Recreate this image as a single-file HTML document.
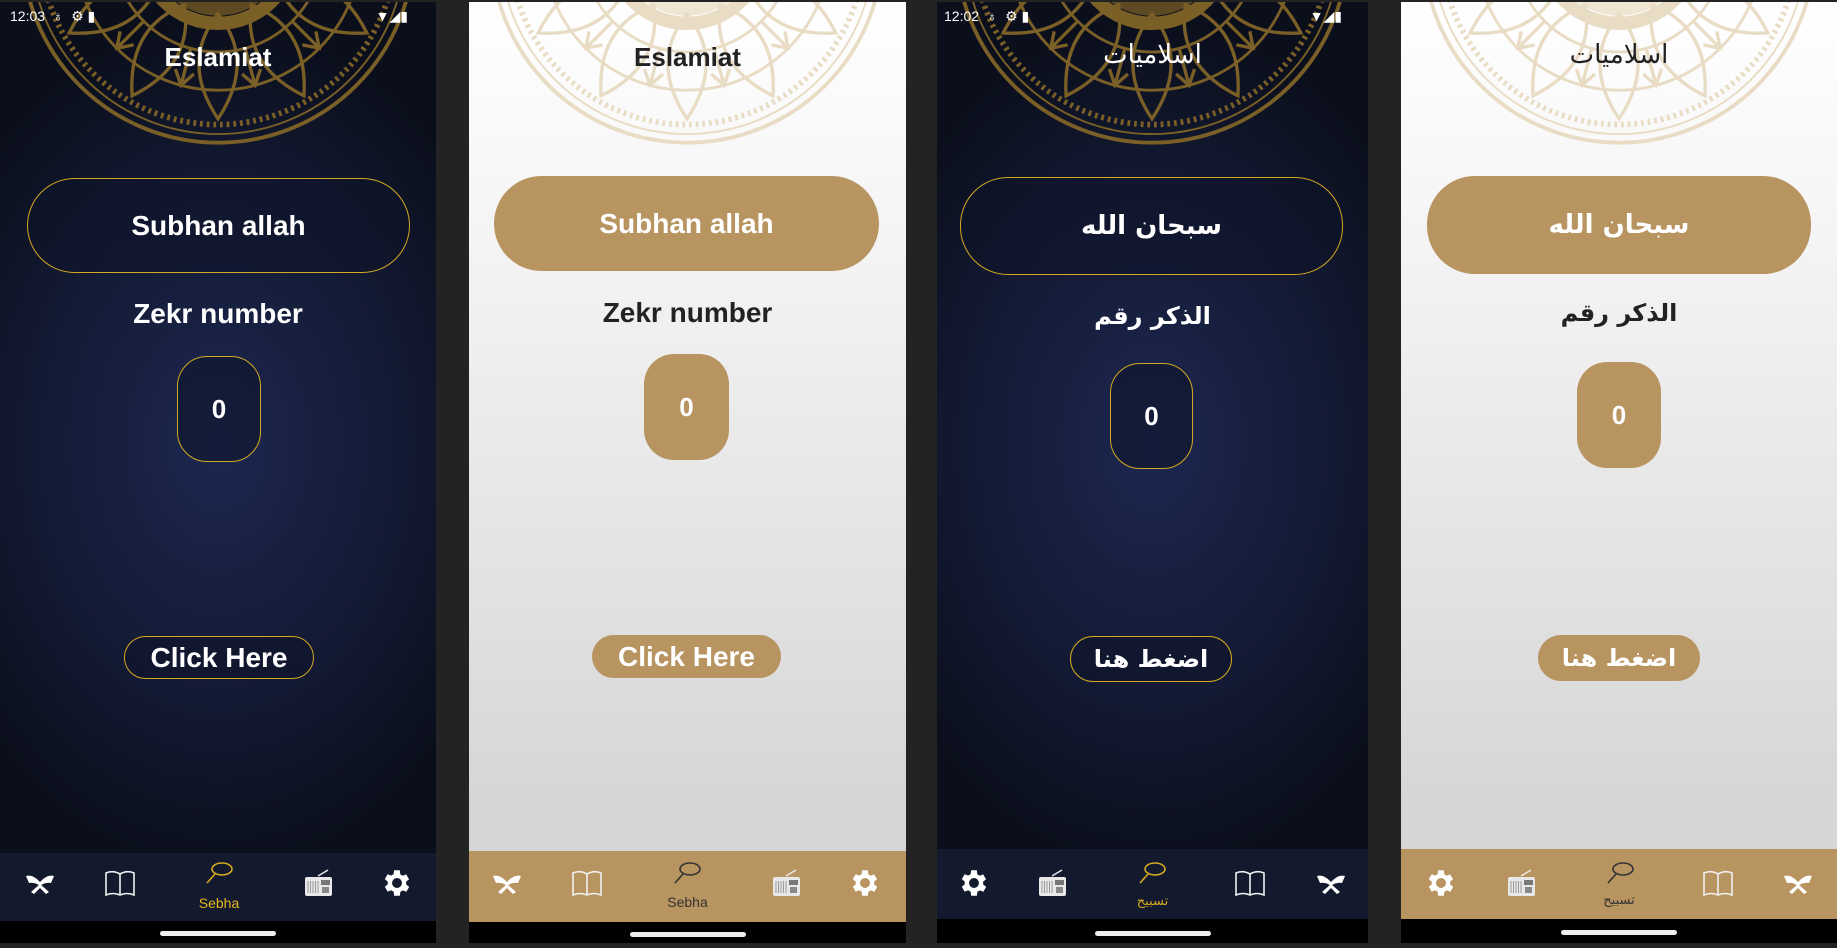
<!DOCTYPE html>
<html><head><meta charset="utf-8"><style>
*{margin:0;padding:0;box-sizing:border-box}
body{width:1837px;height:948px;background:#232323;position:relative;overflow:hidden;font-family:"Liberation Sans","DejaVu Sans",sans-serif}
.ph{position:absolute;top:2px;height:941px;overflow:hidden}
.dark{background:radial-gradient(ellipse 70% 45% at 50% 47%,#1d2750 0%,#141b36 55%,#0b0f1c 100%)}
.light{background:linear-gradient(#ffffff 0%,#f2f2f2 30%,#e3e3e3 60%,#d6d6d6 85%)}
.abs{position:absolute}
.ttl{position:absolute;left:0;right:0;text-align:center;font-weight:bold;font-size:26px;top:40px}
.btn{position:absolute;border-radius:48px;display:flex;align-items:center;justify-content:center;font-weight:bold;font-size:28px;color:#fff}
.dark .btn{border:1.5px solid #d4a820;background:rgba(15,20,40,.55)}
.light .btn{background:#b89461}
.lbl{position:absolute;left:0;right:0;text-align:center;font-weight:bold;font-size:28px}
.dark .lbl,.dark .ttl{color:#fff}
.light .lbl,.light .ttl{color:#222}
.nav{position:absolute;left:0;right:0}
.dark .nav{background:#141a2e}
.light .nav{background:#b89461}
.blk{position:absolute;left:0;right:0;bottom:0;background:#000}
.home{position:absolute;left:50%;margin-left:-58px;width:116px;height:5px;border-radius:3px;background:#eee}
.ic{position:absolute;width:34px;height:34px;margin-left:-17px}
.sb{position:absolute;top:6px;font-size:14px;color:#fff}
.ar{font-family:"DejaVu Sans",sans-serif}
</style></head><body>
<svg width="0" height="0" style="position:absolute">
<defs>
<symbol id="mand" viewBox="-220 -220 440 440">
<g fill="none" stroke="currentColor">
<circle r="205" stroke-width="4"/><circle r="196" stroke-width="2"/><circle r="186" stroke-width="6" stroke-dasharray="3 4"/>
<circle r="150" stroke-width="3"/><circle r="110" stroke-width="3"/><circle r="80" stroke-width="14"/>
<g stroke-width="3.5">
<path d="M0 70 Q40 120 0 180 Q-40 120 0 70Z"/><path d="M0 70 Q40 120 0 180 Q-40 120 0 70Z" transform="rotate(30)"/><path d="M0 70 Q40 120 0 180 Q-40 120 0 70Z" transform="rotate(-30)"/><path d="M0 70 Q40 120 0 180 Q-40 120 0 70Z" transform="rotate(60)"/><path d="M0 70 Q40 120 0 180 Q-40 120 0 70Z" transform="rotate(-60)"/><path d="M0 70 Q40 120 0 180 Q-40 120 0 70Z" transform="rotate(90)"/><path d="M0 70 Q40 120 0 180 Q-40 120 0 70Z" transform="rotate(-90)"/>
<path d="M0 110 L0 150 M-10 135 L0 150 L10 135" transform="rotate(15)"/><path d="M0 110 L0 150 M-10 135 L0 150 L10 135" transform="rotate(-15)"/><path d="M0 110 L0 150 M-10 135 L0 150 L10 135" transform="rotate(45)"/><path d="M0 110 L0 150 M-10 135 L0 150 L10 135" transform="rotate(-45)"/><path d="M0 110 L0 150 M-10 135 L0 150 L10 135" transform="rotate(75)"/><path d="M0 110 L0 150 M-10 135 L0 150 L10 135" transform="rotate(-75)"/>
</g></g>
<circle r="72" fill="currentColor" opacity=".75"/>
</symbol>
<symbol id="quran" viewBox="0 0 34 34"><path d="M3 10 Q10 8 17 16 Q24 8 31 10 L28 17 Q22 16 17 20 Q12 16 6 17Z M8 26 L17 18 L26 26 L23 28 L17 22 L11 28Z" fill="#fff"/></symbol>
<symbol id="book" viewBox="0 0 34 34"><path d="M3 7 Q10 4 17 8 Q24 4 31 7 L31 29 Q24 26 17 29 Q10 26 3 29Z M17 8 L17 29" fill="none" stroke="#f0f0f0" stroke-width="1.6"/></symbol>
<symbol id="radio" viewBox="0 0 34 34"><path d="M17 10 L27 4" stroke="#e8e8e8" stroke-width="1.5"/><rect x="4" y="11" width="27" height="19" rx="2" fill="#e8e8e8"/><g stroke="#999" stroke-width="1"><path d="M7 15v12M9.5 15v12M12 15v12M14.5 15v12M17 15v12"/></g><rect x="20" y="14" width="9" height="5" fill="#777"/><rect x="21" y="21" width="7" height="6" fill="#888"/></symbol>
<symbol id="gear" viewBox="0 0 24 24"><path fill="#fff" d="M19.4 13a7.5 7.5 0 0 0 0-2l2.1-1.6-2-3.5-2.5 1a7 7 0 0 0-1.7-1L15 3h-4l-.4 2.8a7 7 0 0 0-1.7 1l-2.5-1-2 3.5L6.5 11a7.5 7.5 0 0 0 0 2l-2.1 1.6 2 3.5 2.5-1a7 7 0 0 0 1.7 1L11 21h4l.4-2.8a7 7 0 0 0 1.7-1l2.5 1 2-3.5zM13 15.5a3.5 3.5 0 1 1 0-7 3.5 3.5 0 0 1 0 7z" transform="translate(-1 0)"/></symbol>
<symbol id="sebha" viewBox="0 0 34 34"><g fill="none" stroke="currentColor" stroke-width="1.6"><ellipse cx="20" cy="10" rx="10" ry="6"/><path d="M13 15 L5 24"/></g></symbol>
</defs></svg>

<!-- Phone 1 -->
<div class="ph dark" style="left:0;width:436px">
<svg class="abs" style="left:8px;top:-265px;color:#7a5f26" width="420" height="420"><use href="#mand"/></svg>
<div class="sb" style="left:10px">12:03 &nbsp;♁ &nbsp;⚙ ▮</div><div class="sb" style="right:28px">▼◢▮</div>
<div class="ttl" style="top:40px">Eslamiat</div>
<div class="btn" style="left:27px;top:176px;width:383px;height:95px">Subhan allah</div>
<div class="lbl" style="top:296px">Zekr number</div>
<div class="btn" style="left:177px;top:354px;width:84px;height:106px;border-radius:30px;font-size:26px">0</div>
<div class="btn" style="left:124px;top:634px;width:190px;height:43px">Click Here</div>
<div class="nav" style="top:851px;height:70px"></div>
<svg class="ic" style="left:40px;top:864px"><use href="#quran"/></svg>
<svg class="ic" style="left:120px;top:864px"><use href="#book"/></svg>
<svg class="ic" style="left:219px;top:857px;color:#d4a820"><use href="#sebha"/></svg>
<div class="abs" style="left:0;width:438px;top:893px;text-align:center;color:#e5b820;font-size:14px">Sebha</div>
<svg class="ic" style="left:318px;top:864px"><use href="#radio"/></svg>
<svg class="ic" style="left:397px;top:864px"><use href="#gear"/></svg>
<div class="blk" style="height:22px"><div class="home" style="top:10px"></div></div>
</div>

<!-- Phone 2 -->
<div class="ph light" style="left:469px;width:437px">
<svg class="abs" style="left:8px;top:-265px;color:#e9dcc4" width="420" height="420"><use href="#mand"/></svg>
<div class="ttl" style="top:40px">Eslamiat</div>
<div class="btn" style="left:25px;top:174px;width:385px;height:95px">Subhan allah</div>
<div class="lbl" style="top:295px">Zekr number</div>
<div class="btn" style="left:175px;top:352px;width:85px;height:106px;border-radius:30px;font-size:26px">0</div>
<div class="btn" style="left:123px;top:633px;width:189px;height:43px">Click Here</div>
<div class="nav" style="top:849px;height:71px"></div>
<svg class="ic" style="left:38px;top:864px"><use href="#quran"/></svg>
<svg class="ic" style="left:118px;top:864px"><use href="#book"/></svg>
<svg class="ic" style="left:218px;top:857px;color:#333"><use href="#sebha"/></svg>
<div class="abs" style="left:0;width:437px;top:892px;text-align:center;color:#333;font-size:14px">Sebha</div>
<svg class="ic" style="left:317px;top:864px"><use href="#radio"/></svg>
<svg class="ic" style="left:396px;top:864px"><use href="#gear"/></svg>
<div class="blk" style="height:21px"><div class="home" style="top:10px"></div></div>
</div>

<!-- Phone 3 -->
<div class="ph dark" style="left:937px;width:431px">
<svg class="abs" style="left:5px;top:-265px;color:#7a5f26" width="420" height="420"><use href="#mand"/></svg>
<div class="sb" style="left:7px">12:02 &nbsp;♁ &nbsp;⚙ ▮</div><div class="sb" style="right:26px">▼◢▮</div>
<div class="ttl ar" style="top:38px;font-weight:normal">اسلاميات</div>
<div class="btn ar" style="left:23px;top:175px;width:383px;height:98px;font-size:26px">سبحان الله</div>
<div class="lbl ar" style="top:300px;font-size:24px">الذكر رقم</div>
<div class="btn" style="left:173px;top:361px;width:83px;height:106px;border-radius:30px;font-size:26px">0</div>
<div class="btn ar" style="left:133px;top:634px;width:162px;height:46px;font-size:24px">اضغط هنا</div>
<div class="nav" style="top:847px;height:70px"></div>
<svg class="ic" style="left:37px;top:864px"><use href="#gear"/></svg>
<svg class="ic" style="left:115px;top:864px"><use href="#radio"/></svg>
<svg class="ic" style="left:215px;top:857px;color:#d4a820"><use href="#sebha"/></svg>
<div class="abs ar" style="left:0;width:431px;top:892px;text-align:center;color:#d4a820;font-size:13px">تسبيح</div>
<svg class="ic" style="left:313px;top:864px"><use href="#book"/></svg>
<svg class="ic" style="left:394px;top:864px"><use href="#quran"/></svg>
<div class="blk" style="height:24px"><div class="home" style="top:12px"></div></div>
</div>

<!-- Phone 4 -->
<div class="ph light" style="left:1401px;width:436px">
<svg class="abs" style="left:8px;top:-265px;color:#e9dcc4" width="420" height="420"><use href="#mand"/></svg>
<div class="ttl ar" style="top:38px;font-weight:normal">اسلاميات</div>
<div class="btn ar" style="left:26px;top:174px;width:384px;height:98px;font-size:26px">سبحان الله</div>
<div class="lbl ar" style="top:297px;font-size:24px">الذكر رقم</div>
<div class="btn" style="left:176px;top:360px;width:84px;height:106px;border-radius:30px;font-size:26px">0</div>
<div class="btn ar" style="left:137px;top:633px;width:162px;height:46px;font-size:24px">اضغط هنا</div>
<div class="nav" style="top:847px;height:70px"></div>
<svg class="ic" style="left:40px;top:864px"><use href="#gear"/></svg>
<svg class="ic" style="left:120px;top:864px"><use href="#radio"/></svg>
<svg class="ic" style="left:219px;top:857px;color:#333"><use href="#sebha"/></svg>
<div class="abs ar" style="left:0;width:436px;top:891px;text-align:center;color:#333;font-size:13px">تسبيح</div>
<svg class="ic" style="left:317px;top:864px"><use href="#book"/></svg>
<svg class="ic" style="left:397px;top:864px"><use href="#quran"/></svg>
<div class="blk" style="height:24px"><div class="home" style="top:11px"></div></div>
</div>
</body></html>
